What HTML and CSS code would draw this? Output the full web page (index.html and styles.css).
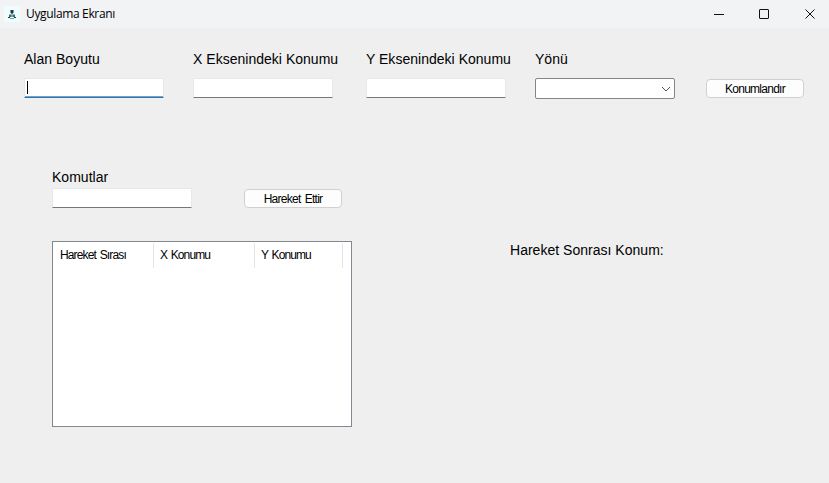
FILE: index.html
```html
<!DOCTYPE html>
<html lang="tr">
<head>
<meta charset="utf-8">
<title>Uygulama Ekranı</title>
<link rel="stylesheet" href="styles.css">
</head>
<body>
<header class="titlebar">
  <svg class="app-icon" width="16" height="16" viewBox="0 0 16 16">
    <rect width="16" height="16" fill="#effdfe"/>
    <path d="M6.500 4h3v3h-3z" fill="#26343d"/>
    <path d="M7 7h2v1H7z" fill="#688087"/>
    <path d="M5 8.500h6V11H5z" fill="#49656d"/>
    <path d="M7 9h2v2H7z" fill="#28c7bd"/>
    <path d="M4 11h2v1H4zM10 11h2v1h-2z" fill="#26343d"/>
    <path d="M6 12h4v1H6z" fill="#7b969d"/>
  </svg>
  <h1 class="title">Uygulama Ekranı</h1>
  <svg class="controls" width="104" height="12" viewBox="0 0 104 12" fill="none" stroke="#111">
    <path d="M0 6.500h10"/>
    <rect x="45.500" y="1.500" width="9" height="9" rx="0.500"/>
    <path d="M91.500 1.500l9 9M100.500 1.500l-9 9"/>
  </svg>
</header>
<main class="form">
  <section class="position-row">
    <div class="field"><label class="label">Alan Boyutu</label><div class="input focused"><span class="caret"></span></div></div>
    <div class="field"><label class="label">X Eksenindeki Konumu</label><div class="input"></div></div>
    <div class="field"><label class="label">Y Eksenindeki Konumu</label><div class="input"></div></div>
    <div class="field"><label class="label">Yönü</label>
      <div class="select"><svg width="10" height="6" viewBox="0 0 10 6" fill="none" stroke="#555"><path d="M1 1l4 4 4-4"/></svg></div>
    </div>
    <button class="button">Konumlandır</button>
  </section>
  <section class="command-row">
    <div class="field"><label class="label">Komutlar</label><div class="input"></div></div>
    <button class="button">Hareket Ettir</button>
  </section>
  <section class="results">
    <div class="list">
      <div class="list-head"><span>Hareket Sırası</span><span>X Konumu</span><span>Y Konumu</span></div>
    </div>
    <p class="label result">Hareket Sonrası Konum:</p>
  </section>
</main>
</body>
</html>
```
FILE: styles.css
```css
* { box-sizing: border-box; }
body {
  margin: 0;
  height: 483px;
  overflow: hidden;
  background: #efefef;
  color: #000;
  font-family: "Liberation Sans", Arial, sans-serif;
}
.titlebar {
  display: flex;
  align-items: center;
  height: 28px;
  padding: 0 13px 0 4px;
  background: #f1f3f5;
}
.title {
  flex: 1;
  margin: 0 0 0 6px;
  font: 400 12px/16px "Open Sans", "Noto Sans", sans-serif;
  letter-spacing: -0.35px;
}
.controls { margin-right: -2px; }
.form { padding: 23px 24px 0; }
.position-row {
  display: grid;
  grid-template-columns: 169px 173px 169px 171px 98px;
  align-items: start;
}
.label {
  display: block;
  height: 16px;
  margin: 0;
  font-size: 14px;
  line-height: 16px;
  letter-spacing: 0.02px;
  white-space: nowrap;
}
.input {
  width: 140px;
  height: 20px;
  background: #fff;
  border: 1px solid #e8e8e8;
  border-bottom-color: #777;
  border-radius: 1px;
}
.position-row .input, .select { margin-top: 11px; }
.input.focused {
  padding: 2px;
  border-bottom-color: #3472ad;
  box-shadow: inset 0 -1px #6ea3d2;
}
.caret { display: block; width: 1px; height: 13px; background: #000; }
.select {
  display: flex;
  justify-content: flex-end;
  align-items: center;
  width: 140px;
  height: 21px;
  padding: 1px 3px 0 0;
  background: #fff;
  border: 1px solid #858585;
  border-radius: 2px;
}
.button {
  width: 98px;
  height: 19px;
  padding: 1px 0 0;
  background: #fdfdfd;
  border: 1px solid #d0d0d0;
  border-radius: 4px;
  color: #000;
  font: 12px/16px "Liberation Sans", Arial, sans-serif;
  letter-spacing: -0.73px;
  word-spacing: 1.5px;
}
.position-row .button { margin-top: 28px; }
.command-row {
  display: grid;
  grid-template-columns: 192px 98px;
  margin: 70px 0 0 28px;
}
.command-row .input { margin-top: 3px; }
.command-row .button { margin-top: 20px; }
.results {
  display: flex;
  margin: 33px 0 0 28px;
}
.list {
  width: 300px;
  height: 186px;
  background: #fff;
  border: 1px solid #828790;
}
.list-head {
  display: grid;
  grid-template-columns: 101px 101px 88px;
  height: 24px;
  margin-top: 1px;
  font-size: 12px;
  line-height: 25px;
  letter-spacing: -0.9px;
  word-spacing: 1.2px;
}
.list-head span { padding-left: 6px; border-right: 1px solid #e5e5e5; }
.list-head span:first-child { padding-left: 7px; letter-spacing: -0.86px; }
.result { margin: 1px 0 0 158px; }
```
